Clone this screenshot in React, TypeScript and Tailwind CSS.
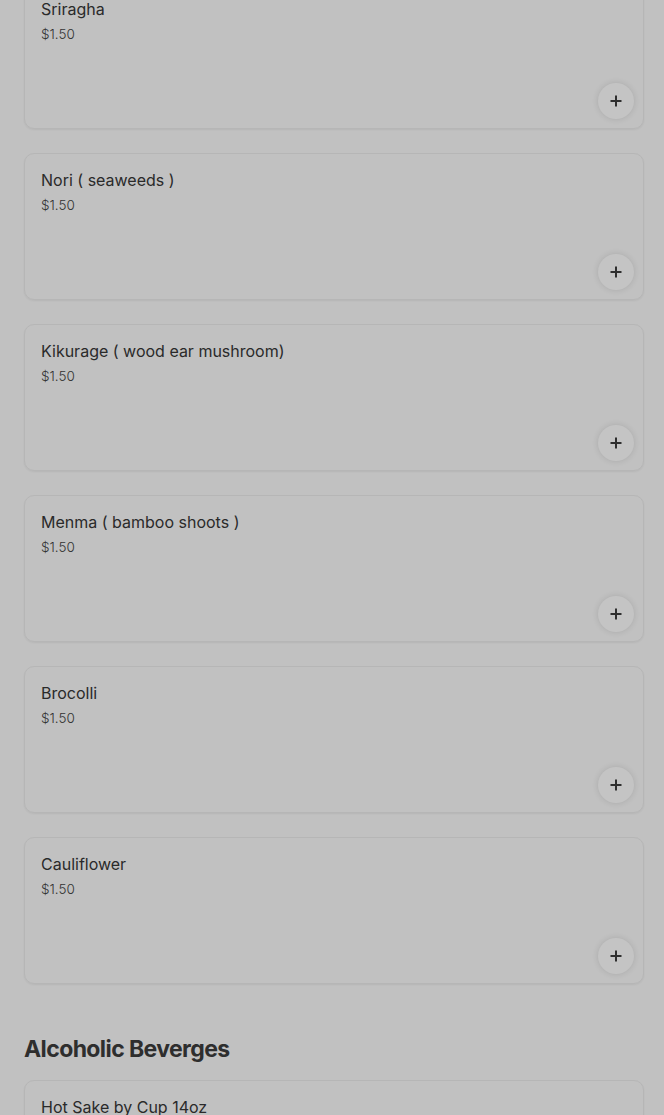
import React from "react";

const items = [
  "Sriragha",
  "Nori ( seaweeds )",
  "Kikurage ( wood ear mushroom)",
  "Menma ( bamboo shoots )",
  "Brocolli",
  "Cauliflower",
];

function Card({ name }: { name: string }) {
  return (
    <div className="relative h-[147px] rounded-[10px] border border-[#b6b6b6] shadow-[0_1px_2px_rgba(0,0,0,0.06)] px-4 pt-4">
      <div className="text-[16px] leading-[20px] font-normal text-[#2a2a2a]">{name}</div>
      <div className="mt-[5px] text-[13.5px] leading-[20px] font-light text-[#333333]">$1.50</div>
      <button className="absolute right-[9px] bottom-[9px] w-9 h-9 rounded-full bg-[#c4c4c4] shadow-[0_0_6px_rgba(0,0,0,0.12)] flex items-center justify-center">
        <svg width="12" height="12" viewBox="0 0 12 12">
          <path d="M6 0.5v11M0.5 6h11" stroke="#2e2e2e" strokeWidth="2" />
        </svg>
      </button>
    </div>
  );
}

export default function App() {
  return (
    <div className="h-[1115px] bg-[#c1c1c1] overflow-hidden" style={{ fontFamily: "Inter, 'Noto Sans', sans-serif" }}>
      <div className="-mt-[18px] pl-6 pr-[20px] flex flex-col gap-6">
        {items.map((n) => (
          <Card key={n} name={n} />
        ))}
      </div>
      <h2 className="pl-6 mt-[50px] text-[23px] leading-[30px] font-bold tracking-[-0.6px] text-[#2e2e2e]">
        Alcoholic Beverges
      </h2>
      <div className="pl-6 pr-[20px] mt-[16px]">
        <Card name="Hot Sake by Cup 14oz" />
      </div>
    </div>
  );
}
